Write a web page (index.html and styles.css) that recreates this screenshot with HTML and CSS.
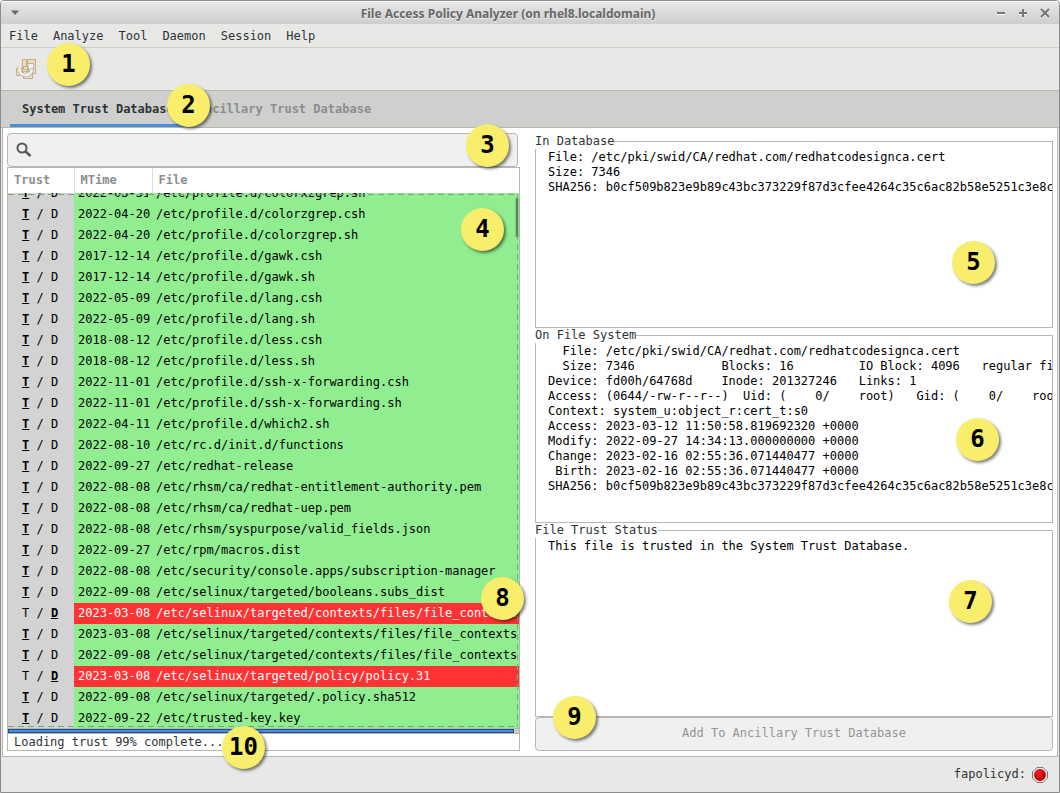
FILE: index.html
```html
<!DOCTYPE html>
<html lang="en">
<head>
<meta charset="utf-8">
<title>File Access Policy Analyzer</title>
<link rel="stylesheet" href="styles.css">
</head>
<body>
<div class="window">
  <header class="titlebar">
    <button class="winbtn" aria-label="Window menu"><svg width="10" height="6" viewBox="0 0 10 6"><path d="M1 0.500h8L5 5z" fill="#666"/></svg></button>
    <h1 class="title">File Access Policy Analyzer (on rhel8.localdomain)</h1>
    <div class="winbtns">
      <button class="winbtn" aria-label="Minimize"><svg width="10" height="10" viewBox="0 0 10 10"><path d="M1 6h8" stroke="#fff" stroke-width="2"/><path d="M1 5h8" stroke="#757575" stroke-width="2"/></svg></button>
      <button class="winbtn" aria-label="Maximize"><svg width="10" height="10" viewBox="0 0 10 10"><path d="M1 6h8M5 2v8" stroke="#eee" stroke-width="2"/><path d="M1 5h8M5 1v8" stroke="#757575" stroke-width="2"/></svg></button>
      <button class="winbtn" aria-label="Close"><svg width="10" height="10" viewBox="0 0 10 10"><path d="M1 2l8 8M9 2l-8 8" stroke="#eee" stroke-width="2"/><path d="M1 1l8 8M9 1l-8 8" stroke="#757575" stroke-width="2"/></svg></button>
    </div>
  </header>
  <nav class="menubar">
    <button class="menu">File</button><button class="menu">Analyze</button><button class="menu">Tool</button><button class="menu">Daemon</button><button class="menu">Session</button><button class="menu">Help</button>
  </nav>
  <div class="toolbar">
    <button class="tool" aria-label="Deploy">
      <svg width="22" height="22" viewBox="0 0 22 22"><g fill="#ecdcc0" stroke="#c9ad84"><path d="M1.500 10.500h6v7h-6z"/><path d="M12.500 1.500h8v14h-8z"/><path d="M8.500 13.500h9v7h-9z"/><path d="M7.500 1.500h4v10h-4z"/></g><path d="M5 8.500c-2 5 1 8.500 5.500 8.500s7-3.500 6-7.500" fill="none" stroke="#b4b3af" stroke-width="4"/><path d="M5 8.500c-2 5 1 8.500 5.500 8.500s7-3.500 6-7.500" fill="none" stroke="#f1f1ef" stroke-width="2.500"/><path d="M12.500 5.500h6v5.500l-2-1-3 3v-3z" fill="#f6f6f5" stroke="#b4b3af"/><path d="M8.500 8.500h4v3h-4z" fill="#ecdcc0" stroke="#c9ad84"/></svg>
    </button>
    <span class="badge b1">1</span>
  </div>
  <div class="tabs" role="tablist">
    <button class="tab active" role="tab" aria-selected="true">System Trust Database</button>
    <button class="tab" role="tab" aria-selected="false">Ancillary Trust Database</button>
    <span class="badge b2">2</span>
  </div>
  <main class="content">
    <section class="left">
      <label class="search"><svg width="16" height="16" viewBox="0 0 16 16" fill="none" stroke="#555a58"><circle cx="6" cy="6" r="4.500" stroke-width="2"/><path d="M9 9l5.500 5" stroke-width="2.500"/></svg><input type="text" aria-label="Search files"></label>
      <div class="listbox">
        <table class="files">
          <thead><tr><th class="trust">Trust</th><th class="mtime">MTime</th><th>File</th></tr></thead>
          <tbody id="rows"></tbody>
        </table>
        <div class="edge"></div>
        <div class="thumb"></div>
      </div>
      <div class="progress"><div class="bar"></div></div>
      <div class="status">Loading trust 99% complete...<span class="badge b10">10</span></div>
      <span class="badge b3">3</span>
      <span class="badge b4">4</span>
      <span class="badge b8">8</span>
    </section>
    <section class="right">
      <fieldset class="frame"><legend>In Database</legend>
<pre>File: /etc/pki/swid/CA/redhat.com/redhatcodesignca.cert
Size: 7346
SHA256: b0cf509b823e9b89c43bc373229f87d3cfee4264c35c6ac82b58e5251c3e8c39</pre><span class="badge b5">5</span></fieldset>
      <fieldset class="frame"><legend>On File System</legend>
<pre>  File: /etc/pki/swid/CA/redhat.com/redhatcodesignca.cert
  Size: 7346            Blocks: 16         IO Block: 4096   regular file
Device: fd00h/64768d    Inode: 201327246   Links: 1
Access: (0644/-rw-r--r--)  Uid: (    0/    root)   Gid: (    0/    root)
Context: system_u:object_r:cert_t:s0
Access: 2023-03-12 11:50:58.819692320 +0000
Modify: 2022-09-27 14:34:13.000000000 +0000
Change: 2023-02-16 02:55:36.071440477 +0000
 Birth: 2023-02-16 02:55:36.071440477 +0000
SHA256: b0cf509b823e9b89c43bc373229f87d3cfee4264c35c6ac82b58e5251c3e8c39</pre><span class="badge b6">6</span></fieldset>
      <fieldset class="frame"><legend>File Trust Status</legend>
<pre>This file is trusted in the System Trust Database.</pre><span class="badge b7">7</span></fieldset>
      <div class="action"><button class="add" disabled>Add To Ancillary Trust Database</button><span class="badge b9">9</span></div>
    </section>
  </main>
  <footer class="footer"><span>fapolicyd:</span><svg width="16" height="16" viewBox="0 0 16 16"><defs><radialGradient id="led" cx=".4" cy=".3"><stop offset="0" stop-color="#f22"/><stop offset="1" stop-color="#c60000"/></radialGradient></defs><path d="M5 .5h6L15.500 5v6L11 15.500H5L.5 11V5z" fill="#eee" stroke="#777"/><circle cx="8" cy="8" r="5.700" fill="url(#led)" stroke="#a00000" stroke-width=".5"/></svg></footer>
</div>
<script src="app.js"></script>
</body>
</html>
```
FILE: styles.css
```css
* { box-sizing: border-box; }
body { margin: 0; font: 12px/15px "DejaVu Sans Mono", monospace; color: #2e3436; }
button, input { font: inherit; color: inherit; background: none; border: 0; padding: 0; margin: 0; }
.window { display: flex; flex-direction: column; height: 100vh; min-height: 600px; border: 1px solid #8c8c8c; border-radius: 4px 4px 0 0; background: #e8e8e6; overflow: hidden; }
.titlebar { display: flex; align-items: center; height: 23px; flex: none; padding: 0 9px; background: linear-gradient(#e6e6e6, #cecece); border-top: 1px solid #fff; }
.title { flex: 1; margin: 0; padding-top: 1px; text-align: center; font: bold 12px/20px "Noto Sans", sans-serif; color: #686868; text-shadow: 0 1px #eee; white-space: nowrap; }
.winbtns { display: flex; gap: 12px; }
.winbtn { display: flex; }
.menubar { display: flex; gap: 15px; height: 24px; flex: none; padding: 1px 8px 0; border-bottom: 1px solid #cfcfcc; }
.toolbar { position: relative; display: flex; align-items: center; height: 42px; flex: none; padding: 0 14px; }
.tool { display: flex; }
.tabs { position: relative; display: flex; height: 38px; flex: none; padding: 0 9px; background: #cfcfcd; border: solid #b6b6b3; border-width: 1px 0; }
.tab { padding: 3px 12px 0; font-weight: bold; color: #8b8e8f; white-space: nowrap; border-bottom: 3px solid transparent; }
.tab.active { color: #2e3436; border-color: #4a90d9; }
.content { flex: 1; min-height: 0; display: grid; grid-template-columns: minmax(0, 513fr) minmax(0, 518fr); gap: 15px; margin: 0 1px; padding: 5px 4px; background: #fff; border: solid #b6b6b3; border-width: 0 1px 1px; }
.left, .right { min-height: 0; position: relative; }
.left { display: flex; flex-direction: column; }
.search { display: flex; align-items: center; gap: 8px; height: 34px; flex: none; margin-right: 2px; padding: 0 8px; border: 1px solid #b6b6b3; border-radius: 4px; background: #f0f0f0; }
.search input { flex: 1; min-width: 0; outline: 0; }
.listbox { position: relative; flex: 1; min-height: 0; overflow: hidden; border: solid #b6b6b3; border-width: 1px 1px 0; }
.files { width: 100%; table-layout: fixed; border-collapse: collapse; color: #000; }
.files th { height: 25px; padding: 0 6px; text-align: left; color: #8b8e8f; border-right: 1px solid #ddd; background: #fff; }
.files th:last-child { border-right: 0; }
.files .trust { width: 66px; }
.files .mtime { width: 78px; }
.files td { height: 21px; padding: 0 4px; white-space: pre; overflow: hidden; background: #90ee90; }
.files td:first-child { padding-left: 14px; background: #d3d3d3; }
.files .clip td { height: 11px; vertical-align: top; }
.clip span { display: flex; height: 11px; align-items: flex-end; padding-bottom: 3px; overflow: hidden; }
.clip i { font-style: normal; }
.files .bad td:not(:first-child) { background: #f33; color: #fff; }
b { text-decoration: underline; }
.edge { position: absolute; inset: 26px 1px 1px 0; background: repeating-linear-gradient(90deg, #79a579 0 6px, transparent 6px 10px) top / 100% 1px no-repeat, repeating-linear-gradient(90deg, #79a579 0 6px, transparent 6px 10px) bottom / 100% 1px no-repeat, repeating-linear-gradient(#6fb56f 0 6px, transparent 6px 10px) right / 1px 100% no-repeat; }
.thumb { position: absolute; top: 29px; right: 0; width: 4px; height: 41px; border: 1px solid #8cc98c; border-radius: 2px; background: #4f8f4f; }
.progress { height: 6px; flex: none; border: 1px solid #b6b6b3; background: #ccc; }
.bar { width: 99%; height: 4px; background: #4a90d9; border: 1px solid #1c4d85; }
.status { position: relative; height: 17px; flex: none; padding-left: 6px; line-height: 17px; border: 1px solid #b6b6b3; border-top: 0; }
.right { display: grid; padding-top: 1px; grid-template-rows: repeat(3, minmax(0, 1fr)) 34px; }
.frame { position: relative; min-width: 0; margin: 0; padding: 1px 0 0 12px; border: 1px solid #b6b6b3; overflow: hidden; }
.frame legend { padding: 0; margin-left: -13px; background: #fff; }
.frame pre { margin: 0; font: inherit; color: #000; overflow: hidden; }
.action { position: relative; display: flex; }
.add { flex: 1; color: #929595; background: #f0f0f0; border: 1px solid #b6b6b3; border-radius: 4px; }
.footer { display: flex; align-items: center; justify-content: flex-end; gap: 6px; height: 35px; flex: none; padding: 0 11px; }
.badge { position: absolute; z-index: 3; width: 43px; height: 43px; border-radius: 50%; background: #f9ee6b; color: #000; font: bold 24px/43px "DejaVu Sans Mono", monospace; text-align: center; box-shadow: 2px 2px 3px rgba(0, 0, 0, .5); }
.b1 { left: 46px; top: -5px; }
.b2 { left: 166px; top: -7px; }
.b3 { right: 11px; top: -9px; }
.b4 { right: 16px; top: 75px; }
.b8 { right: -4px; top: 444px; }
.b10 { left: 214px; top: -8px; }
.b5 { right: 57px; top: 92px; }
.b6 { right: 53px; top: 75px; }
.b7 { right: 60px; top: 42px; }
.b9 { left: 18px; top: -21px; }
```
FILE: app.js
```js
const files = [
  ['2022-03-31', '/etc/profile.d/colorxzgrep.sh'],
  ['2022-04-20', '/etc/profile.d/colorzgrep.csh'],
  ['2022-04-20', '/etc/profile.d/colorzgrep.sh'],
  ['2017-12-14', '/etc/profile.d/gawk.csh'],
  ['2017-12-14', '/etc/profile.d/gawk.sh'],
  ['2022-05-09', '/etc/profile.d/lang.csh'],
  ['2022-05-09', '/etc/profile.d/lang.sh'],
  ['2018-08-12', '/etc/profile.d/less.csh'],
  ['2018-08-12', '/etc/profile.d/less.sh'],
  ['2022-11-01', '/etc/profile.d/ssh-x-forwarding.csh'],
  ['2022-11-01', '/etc/profile.d/ssh-x-forwarding.sh'],
  ['2022-04-11', '/etc/profile.d/which2.sh'],
  ['2022-08-10', '/etc/rc.d/init.d/functions'],
  ['2022-09-27', '/etc/redhat-release'],
  ['2022-08-08', '/etc/rhsm/ca/redhat-entitlement-authority.pem'],
  ['2022-08-08', '/etc/rhsm/ca/redhat-uep.pem'],
  ['2022-08-08', '/etc/rhsm/syspurpose/valid_fields.json'],
  ['2022-09-27', '/etc/rpm/macros.dist'],
  ['2022-08-08', '/etc/security/console.apps/subscription-manager'],
  ['2022-09-08', '/etc/selinux/targeted/booleans.subs_dist'],
  ['2023-03-08', '/etc/selinux/targeted/contexts/files/file_contexts', true],
  ['2023-03-08', '/etc/selinux/targeted/contexts/files/file_contexts.h'],
  ['2022-09-08', '/etc/selinux/targeted/contexts/files/file_contexts.s'],
  ['2023-03-08', '/etc/selinux/targeted/policy/policy.31', true],
  ['2022-09-08', '/etc/selinux/targeted/.policy.sha512'],
  ['2022-09-22', '/etc/trusted-key.key'],
  ['', '']
];
document.getElementById('rows').innerHTML = files.map(([date, path, bad], n) => {
  const trust = !date ? '' : bad ? 'T / <b>D</b>' : '<b>T</b> / D';
  const cells = [trust, date, path].map(c => n === 0 ? `<td><span><i>${c}</i></span></td>` : `<td>${c}</td>`);
  return `<tr class="${n === 0 ? 'clip' : bad ? 'bad' : ''}">${cells.join('')}</tr>`;
}).join('');
```
